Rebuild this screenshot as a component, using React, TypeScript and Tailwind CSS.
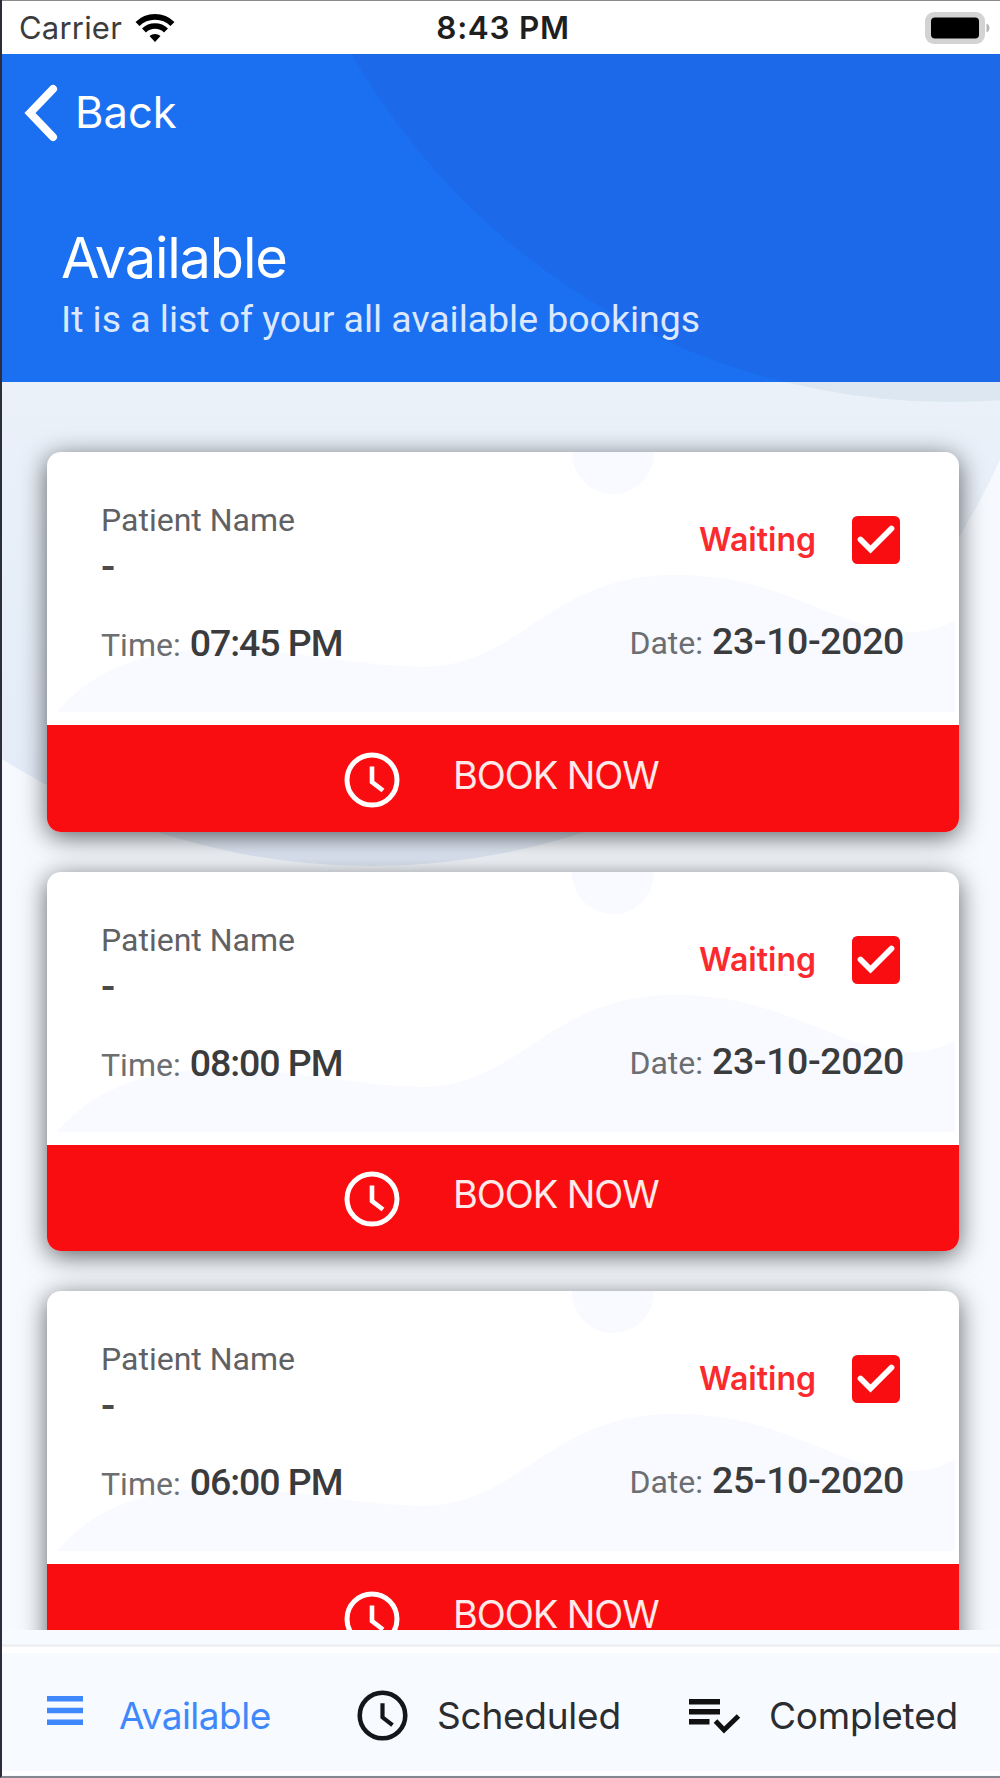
import type { ReactNode } from 'react'

interface Booking {
  patient: string
  time: string
  date: string
}

const bookings: Booking[] = [
  { patient: '-', time: '07:45 PM', date: '23-10-2020' },
  { patient: '-', time: '08:00 PM', date: '23-10-2020' },
  { patient: '-', time: '06:00 PM', date: '25-10-2020' },
]

function ClockIcon({ className }: { className?: string }) {
  return (
    <svg viewBox="0 0 56 56" className={className} fill="none" stroke="currentColor" strokeWidth="5">
      <circle cx="28" cy="28" r="25" />
      <path d="M28 14.5V30L39 38.5" strokeWidth="4.6" />
    </svg>
  )
}

function StatusBar() {
  return (
    <div className="relative flex h-[54px] items-center justify-between border-t border-[#8a8a8a] bg-white pl-[17px] pr-[10px]">
      <div className="flex items-center">
        <span className="w-[116px] text-[31px] leading-none tracking-[0.2px] text-[#3c3c3c]">Carrier</span>
        <svg viewBox="0 0 40 30" className="h-[30px] w-10" fill="none" stroke="#000" strokeWidth="5.6">
          <path d="M2.5 11C12 1.5 28 1.5 37.5 11" />
          <path d="M9 17.5C15 11.5 25 11.5 31 17.5" />
          <path d="M20 29l-5.5-6c3-2.8 8-2.8 11 0z" fill="#000" stroke="none" />
        </svg>
      </div>
      <div className="absolute inset-x-0 top-0 flex h-[54px] items-center justify-center pl-[4px]">
        <span className="text-[31.5px] font-semibold leading-none tracking-[0.7px] text-[#1f1f1f]">8:43 PM</span>
      </div>
      <svg viewBox="0 0 66 34" className="h-[34px] w-[66px]">
        <rect x="1" y="1" width="60" height="32" rx="9" fill="#d3d3d3" />
        <path d="M62.5 12.5c4 1.5 4 7.5 0 9z" fill="#b5b5b5" />
        <rect x="7" y="6.5" width="48" height="21" rx="4" fill="#000" />
      </svg>
    </div>
  )
}

function Header() {
  return (
    <header className="relative h-[327.5px] overflow-hidden bg-[#1b6ff1] text-white">
      <svg viewBox="0 0 998 327.5" className="absolute inset-0 h-full w-full">
        <circle cx="948" cy="-340" r="688" fill="#1c69e9" />
      </svg>
      <div className="relative flex items-center pl-[20px] pt-[28px]">
        <svg viewBox="0 0 36 60" className="h-[60px] w-9" fill="none" stroke="#fff" strokeWidth="8" strokeLinecap="round" strokeLinejoin="miter">
          <path d="M31 6L8 30L31 54" />
        </svg>
        <span className="pl-[17px] text-[43.5px] leading-[61px]">Back</span>
      </div>
      <div className="relative pl-[59px] pt-[83px]">
        <h1 className="text-[56px] leading-[64px] tracking-[-1.2px]">Available</h1>
        <p className="-mt-px font-['Roboto',sans-serif] text-[37.5px] leading-[60px] tracking-[-0.05px] text-[#dbe8fd]">
          It is a list of your all available bookings
        </p>
      </div>
    </header>
  )
}

function Field({ label, value, className }: { label: string; value: string; className: string }) {
  return (
    <div className="flex items-baseline gap-[9px]">
      <span className="text-[32px] text-[#6c6e72]">{label}</span>
      <span className={`text-[37.5px] font-medium text-[#3a3b3d] ${className}`}>{value}</span>
    </div>
  )
}

function BookingCard({ patient, time, date }: Booking) {
  return (
    <article className="h-[379.5px] w-[912px] shrink-0 rounded-[14px] bg-white shadow-[0_5px_26px_rgba(0,0,0,0.62)]">
      <div className="relative h-[273px] overflow-hidden rounded-t-[14px] font-['Roboto',sans-serif]">
        <svg viewBox="0 0 912 273" className="absolute inset-0 h-full w-full" fill="#f8faff">
          <circle cx="566" cy="1" r="41" />
          <path d="M10 260C50 212 110 196 180 197C250 198 310 214 373 215C475 215 500 123 628 123C740 123 790 180 865 180C885 180 900 173 908 168V260Z" />
        </svg>
        <div className="relative flex justify-between pl-[54px] pr-[59px] pt-[46px]">
          <div className="pt-px text-[#5f6164]">
            <p className="text-[32px] leading-[42px]">Patient Name</p>
            <p className="pt-px text-[42px] font-medium leading-[50px] text-[#4a4b4d]">{patient}</p>
          </div>
          <div className="flex h-[84px] items-center gap-[36px]">
            <span className="font-['Inter',sans-serif] text-[32px] font-semibold text-[#fb2a2e]">Waiting</span>
            <svg viewBox="0 0 48 48" className="h-12 w-12">
              <rect width="48" height="48" rx="5.5" fill="#f90d11" />
              <path d="M8.5 23.5L18.5 33.5L39.5 12.5" fill="none" stroke="#fff" strokeWidth="5.8" strokeLinecap="round" />
            </svg>
          </div>
        </div>
        <div className="relative -mt-[5px] flex items-start justify-between pl-[54px] pr-[55px] pt-[29px] leading-[50px]">
          <div className="pt-[2px]">
            <Field label="Time:" value={time} className="tracking-[-1.05px]" />
          </div>
          <Field label="Date:" value={date} className="tracking-[-0.4px]" />
        </div>
      </div>
      <button className="flex h-[106.5px] w-full items-center rounded-b-[14px] bg-[#f90d11] pl-[297px] text-white">
        <ClockIcon className="mt-[3px] h-14 w-14" />
        <span className="pb-[7px] pl-[53px] text-[38px] leading-none tracking-[-1.1px] text-[#ffe9e9]">BOOK NOW</span>
      </button>
    </article>
  )
}

function Tab({ icon, label, className }: { icon: ReactNode; label: string; className: string }) {
  return (
    <a className={`flex items-center ${className}`}>
      {icon}
      <span className="text-[37px] leading-none">{label}</span>
    </a>
  )
}

function TabBar() {
  return (
    <nav className="flex h-[131px] items-start border-t-[3px] border-[#eff0f3] bg-[#f7faff] shadow-[inset_0_6px_0_#fff,inset_0_-4px_0_#fff]">
      <Tab
        label="Available"
        className="h-[136px] w-[312px] gap-[36px] pl-[45px] tracking-[-0.5px] text-[#3f88fb]"
        icon={
          <svg viewBox="0 0 36 38" className="h-[38px] w-9" fill="currentColor">
            <path d="M0 0h36v5.5H0zM0 11.7h36v5.5H0zM0 23.5h36v5.5H0z" />
          </svg>
        }
      />
      <Tab
        label="Scheduled"
        className="h-[136px] w-[374px] gap-[29px] pl-[43px] tracking-[-0.25px] text-[#2b2d30]"
        icon={<ClockIcon className="h-[51px] w-[51px] text-[#151619]" />}
      />
      <Tab
        label="Completed"
        className="h-[136px] gap-[28px] tracking-[-0.2px] text-[#2b2d30]"
        icon={
          <svg viewBox="0 0 53 36" className="mt-[3px] h-[36px] w-[53px]" fill="#111">
            <path d="M1 0h31v5.5H1zM1 10h31v5.5H1zM1 20h20.5v5.5H1z" />
            <path d="M27.5 22l8.5 9L50.5 17" fill="none" stroke="#111" strokeWidth="5" />
          </svg>
        }
      />
    </nav>
  )
}

export default function App() {
  return (
    <div className="h-[1778px] w-[1000px] overflow-hidden border-b-2 border-l-2 border-b-[#85878f] border-l-[#2b2d3a] bg-[#f6faff] font-['Inter',sans-serif]">
      <StatusBar />
      <Header />
      <main className="relative h-[1248.5px] overflow-hidden">
        {/* soft overlapping discs behind the list */}
        <svg viewBox="0 0 998 1248.5" className="absolute inset-0 h-full w-full">
          <defs>
            <linearGradient id="disc-fill" gradientUnits="userSpaceOnUse" x1="0" y1="0" x2="0" y2="484">
              <stop offset="0" stopColor="#eaf1f9" />
              <stop offset="1" stopColor="#e2ebf8" />
            </linearGradient>
            <clipPath id="disc">
              <circle cx="369" cy="-206" r="690" />
            </clipPath>
          </defs>
          <rect width="998" height="1249" fill="#f6faff" />
          <circle cx="369" cy="-206" r="690" fill="url(#disc-fill)" />
          <circle cx="948" cy="-668" r="688" fill="#dde7f1" clipPath="url(#disc)" />
        </svg>
        <div className="relative flex flex-col gap-10 pl-[45px] pt-[70.5px]">
          {bookings.map((b, i) => (
            <BookingCard key={i} {...b} />
          ))}
        </div>
      </main>
      <div className="h-[14px] bg-[#f7faff]" />
      <TabBar />
    </div>
  )
}
